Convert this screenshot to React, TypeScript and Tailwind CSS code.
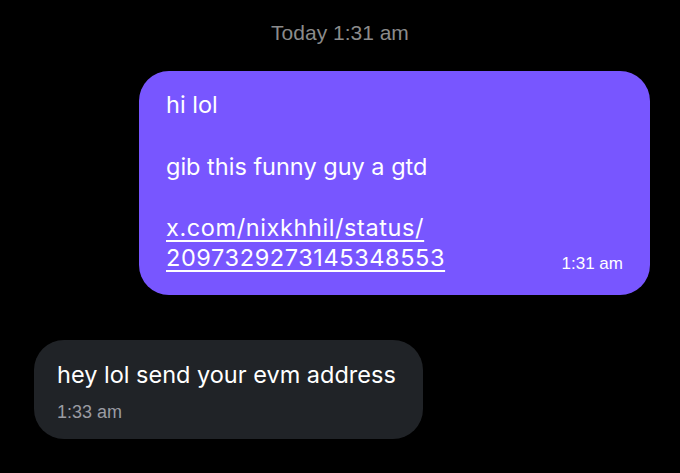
export default function App() {
  return (
    <div
      className="w-[680px] h-[473px] bg-black overflow-hidden text-white"
      style={{ fontFamily: "Inter, 'Noto Sans', sans-serif" }}
    >
      <div className="pt-[21px] text-center text-[21px] leading-[24px] text-[#8b8b8b] font-['Liberation_Sans',Arial,sans-serif]">
        Today 1:31 am
      </div>

      <div className="flex justify-end pr-[30px] mt-[26px]">
        <div className="w-[511px] h-[224px] rounded-[30px] bg-[#7856ff] pl-[27px] pr-[27px] pt-[18px] flex flex-col">
          <p className="text-[23.5px] leading-[31px]">hi lol</p>
          <p className="text-[23.5px] leading-[31px] mt-[31px]">gib this funny guy a gtd</p>
          <div className="flex items-end justify-between mt-[31px]">
            <a className="text-[23.5px] leading-[30px] tracking-[0.6px] underline underline-offset-[4px] decoration-[1.5px]">
              x.com/nixkhhil/status/
              <br />
              2097329273145348553
            </a>
            <span className="text-[17px] leading-[24px] mb-[-3px] font-['Liberation_Sans',Arial,sans-serif]">1:31 am</span>
          </div>
        </div>
      </div>

      <div className="pl-[34px] mt-[45px]">
        <div className="w-[389px] h-[99px] rounded-[30px] bg-[#202327] pl-[23px] pt-[21px]">
          <p className="text-[23.5px] leading-[28px]">hey lol send your evm address</p>
          <p className="text-[18px] leading-[24px] mt-[11px] text-[#9a9ca3] font-['Liberation_Sans',Arial,sans-serif]">1:33 am</p>
        </div>
      </div>
    </div>
  );
}
